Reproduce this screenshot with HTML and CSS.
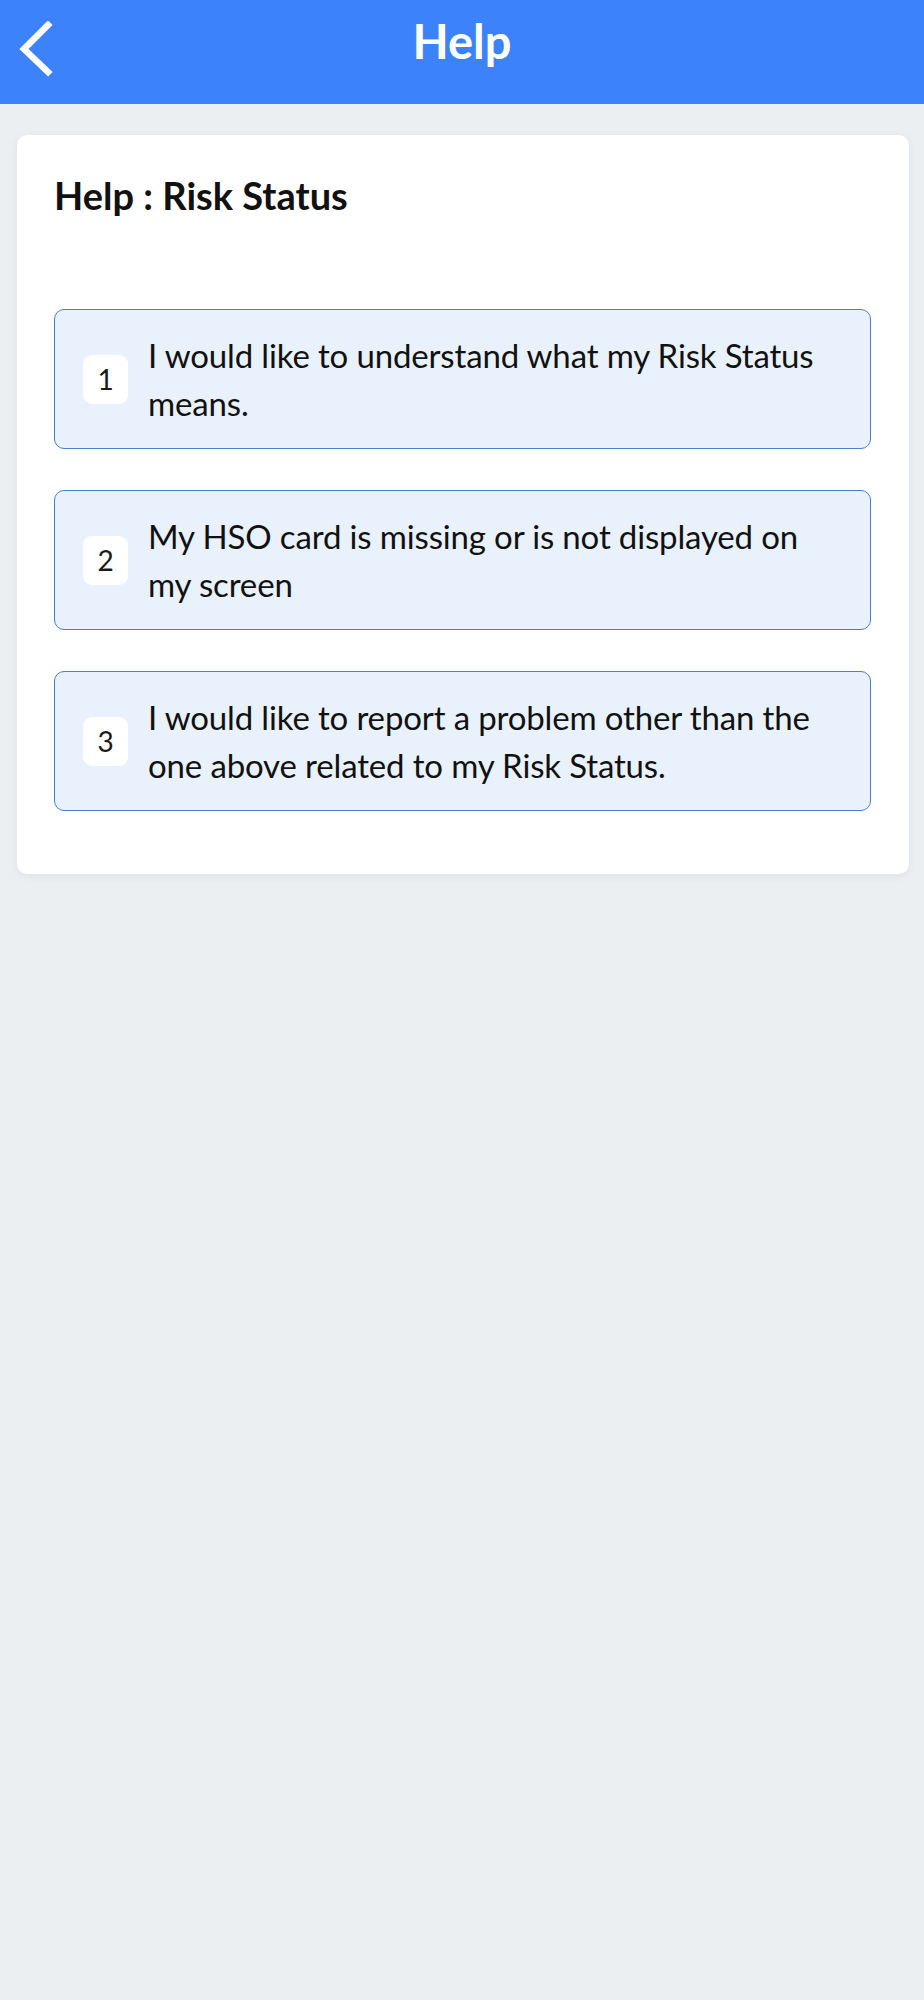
FILE: index.html
```html
<!DOCTYPE html>
<html lang="en">
<head>
<meta charset="utf-8">
<title>Help</title>
<link rel="stylesheet" href="styles.css">
</head>
<body>
<header class="topbar">
  <div class="back">
    <svg width="40" height="60" viewBox="0 0 40 60" aria-hidden="true">
      <polyline points="29,4 5,28 29,51" fill="none" stroke="#ffffff" stroke-width="6.5" stroke-linecap="square" stroke-linejoin="miter"/>
    </svg>
  </div>
  <h1 class="topbar-title">Help</h1>
  <div class="spacer"></div>
</header>
<main class="content">
  <section class="card">
    <h2 class="card-title">Help : Risk Status</h2>
    <ul class="options">
      <li class="option"><span class="num">1</span><span class="text">I would like to understand what my Risk Status means.</span></li>
      <li class="option"><span class="num">2</span><span class="text">My HSO card is missing or is not displayed on my screen</span></li>
      <li class="option"><span class="num">3</span><span class="text">I would like to report a problem other than the one above related to my Risk Status.</span></li>
    </ul>
  </section>
</main>
</body>
</html>
```

FILE: styles.css
```css
* { box-sizing: border-box; }
html, body { margin: 0; padding: 0; }
body {
  background: #ebeff1;
  font-family: Lato, "Noto Sans", "Liberation Sans", sans-serif;
  color: #111111;
  width: 924px;
  min-height: 2000px;
}
.topbar {
  height: 104px;
  background: #3c83fb;
  display: grid;
  grid-template-columns: 1fr auto 1fr;
  align-items: start;
}
.back {
  padding-top: 21px;
  padding-left: 19px;
  line-height: 0;
}
.topbar-title {
  margin: 0;
  padding-top: 13px;
  font-size: 47px;
  line-height: 56px;
  font-weight: 700;
  color: #ffffff;
}
.content {
  padding: 31px 15px 0 17px;
}
.card {
  background: #ffffff;
  border-radius: 10px;
  padding: 37px 38px 63px 37px;
  box-shadow: 0 2px 8px rgba(0, 0, 0, 0.06);
}
.card-title {
  margin: 0 0 91px 0;
  font-size: 38px;
  line-height: 46px;
  font-weight: 700;
  color: #111111;
}
.options {
  list-style: none;
  margin: 0;
  padding: 0;
  display: flex;
  flex-direction: column;
  gap: 41px;
}
.option {
  height: 140px;
  display: flex;
  align-items: center;
  gap: 20px;
  padding: 0 40px 0 28px;
  background: #e9f1fc;
  border: 1.5px solid #4a7fc9;
  border-radius: 10px;
}
.num {
  flex: none;
  width: 45px;
  height: 49px;
  background: #ffffff;
  border-radius: 9px;
  display: flex;
  align-items: center;
  justify-content: center;
  font-size: 28px;
  font-weight: 400;
  color: #1a1a1a;
}
.text {
  font-size: 33px;
  line-height: 48px;
  letter-spacing: -0.15px;
  color: #111111;
}
```
